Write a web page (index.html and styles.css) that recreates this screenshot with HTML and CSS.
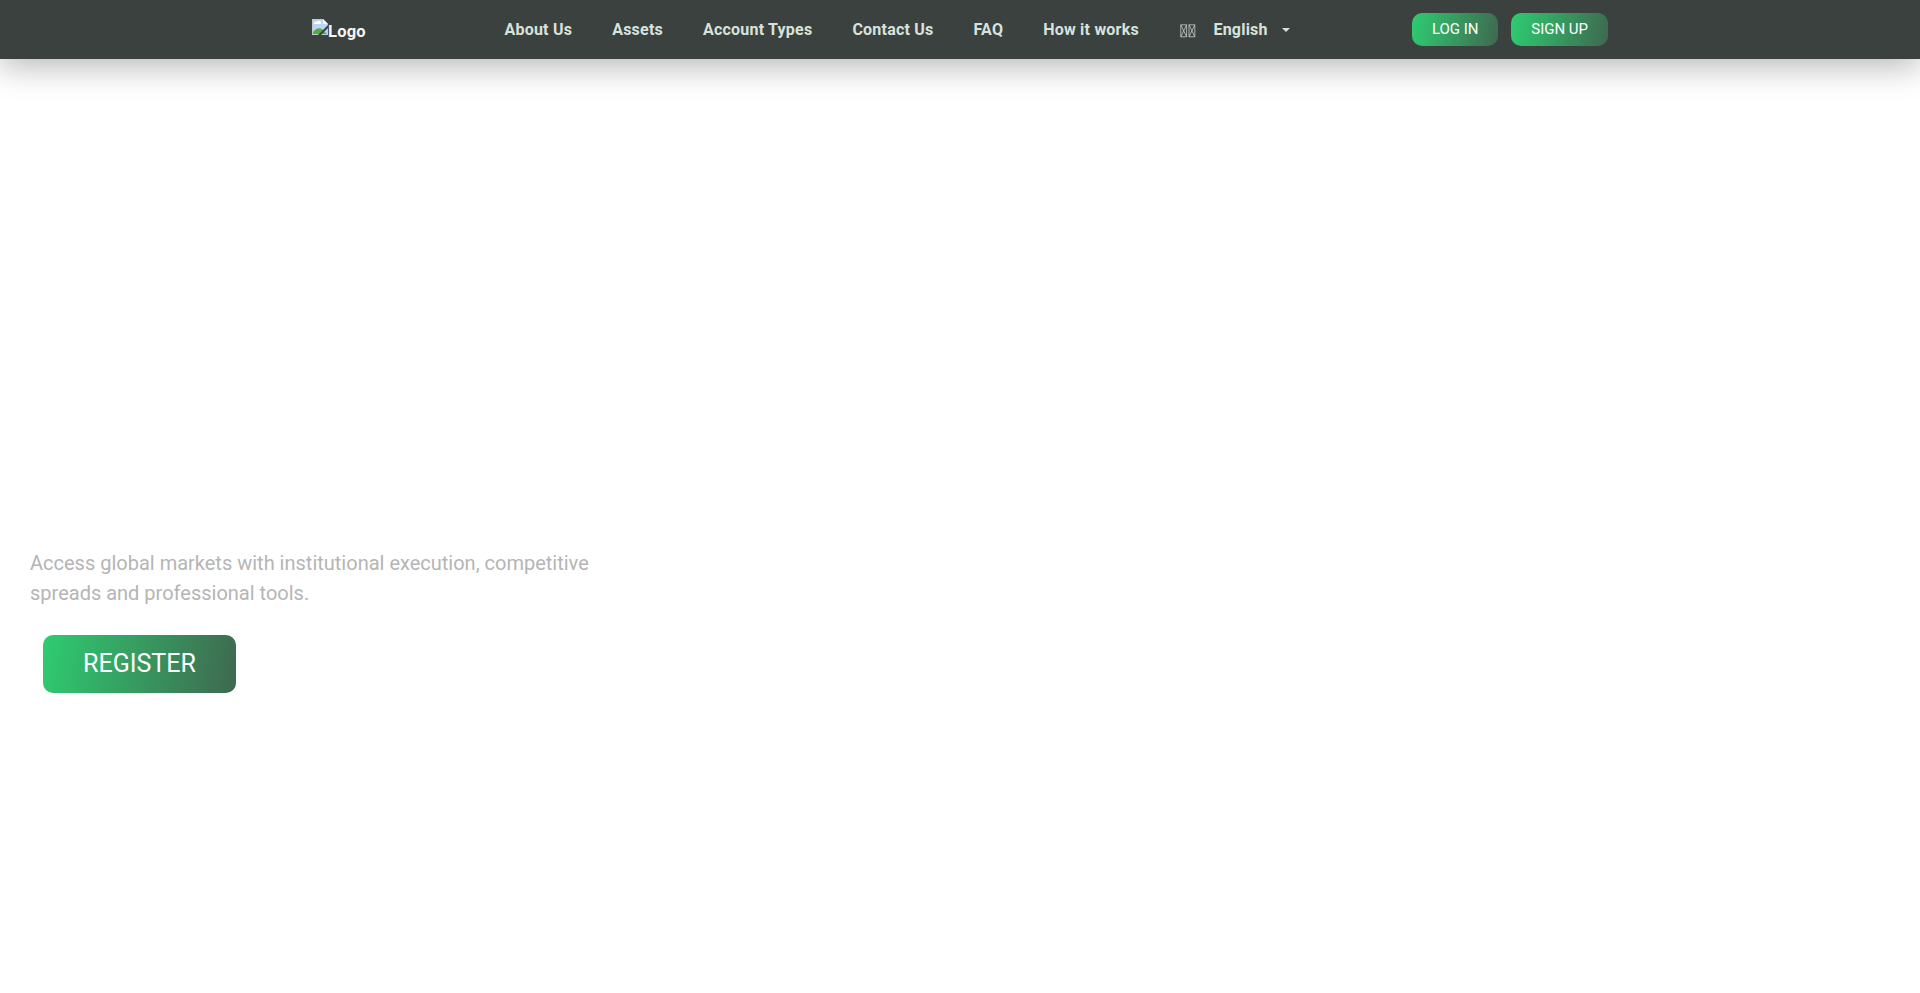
FILE: index.html
```html
<!DOCTYPE html>
<html lang="en">
<head>
<meta charset="utf-8">
<title>Home</title>
<link rel="stylesheet" href="styles.css">
</head>
<body>
<header class="header">
  <a class="logo"><svg class="logo-icon" width="16" height="16" viewBox="0 0 16 16"><path d="M0 0h11l5 5v11H0z" fill="#c4c8cb"/><path d="M1 1h10v4h4v10H1z" fill="#bfd3f8"/><path d="M2 5a2 2 0 0 1 3-2 2 2 0 0 1 4 2z" fill="#fff"/><path d="M1 15v-2c3-4 7-5 10-2l4 4z" fill="#4caf3f"/><path d="M11 0v5h5z" fill="#f5f7f8"/><path d="M16 6v3L9 16H6z" fill="#3b413e"/></svg><span>Logo</span></a>
  <nav class="nav">
    <a>About Us</a><a>Assets</a><a>Account Types</a><a>Contact Us</a><a>FAQ</a><a>How it works</a>
    <a class="language"><svg class="flag" width="16" height="14" viewBox="0 0 16 14" fill="none" stroke="#c5cec9" stroke-width=".8"><path d="M.8.8h5.8v12H.8zM9 .8h5.8v12H9zM.8.8l5.8 12M6.6.8l-5.8 12M9 .8l5.8 12M14.8.8L9 12.8"/></svg><span>English</span><i class="caret"></i></a>
  </nav>
  <div class="actions"><a class="button">LOG IN</a><a class="button">SIGN UP</a></div>
</header>
<main class="hero">
  <p class="lead">Access global markets with institutional execution, competitive spreads and professional tools.</p>
  <a class="button button-large">REGISTER</a>
</main>
</body>
</html>
```
FILE: styles.css
```css
* { box-sizing: border-box; }
body { margin: 0; background: #fff; font-family: Roboto, sans-serif; height: 993px; overflow: hidden; }
.header { display: flex; align-items: center; height: 59px; padding-left: 312px; background: #3b413e; box-shadow: 0 8px 32px rgba(20, 24, 22, .3); color: #d8e2dd; font-size: 16px; font-weight: 700; }
.logo { display: flex; width: 192.5px; color: #f5f7f6; line-height: 24px; padding-top: 4px; font-size: 16.5px; letter-spacing: .2px; }
.logo-icon { margin-top: -1px; }
.nav { display: flex; align-items: center; gap: 40px; width: 907.5px; letter-spacing: .22px; white-space: nowrap; line-height: 24px; }
.language { display: flex; align-items: center; }
.flag { margin-left: 1px; margin-right: 17.5px; margin-top: 2px; }
.caret { margin-left: 14px; border: 4.8px solid transparent; border-top-color: #d8e2dd; border-bottom: 0; }
.actions { display: flex; gap: 13px; }
.button { display: block; padding: 0 20px; border-radius: 10px; background: linear-gradient(100deg, #2ecc71, #3f684f); color: #fff; font-size: 15px; font-weight: 400; line-height: 33px; white-space: nowrap; }
.actions .button { letter-spacing: -.05px; }
.hero { padding: 489px 30px 0; }
.lead { width: 580px; margin: 0 0 27px; color: #b5b5b5; font-size: 20px; line-height: 30px; }
.button-large { width: 193px; margin-left: 13px; padding: 0; text-align: center; font-size: 25px; line-height: 58px; }
```
